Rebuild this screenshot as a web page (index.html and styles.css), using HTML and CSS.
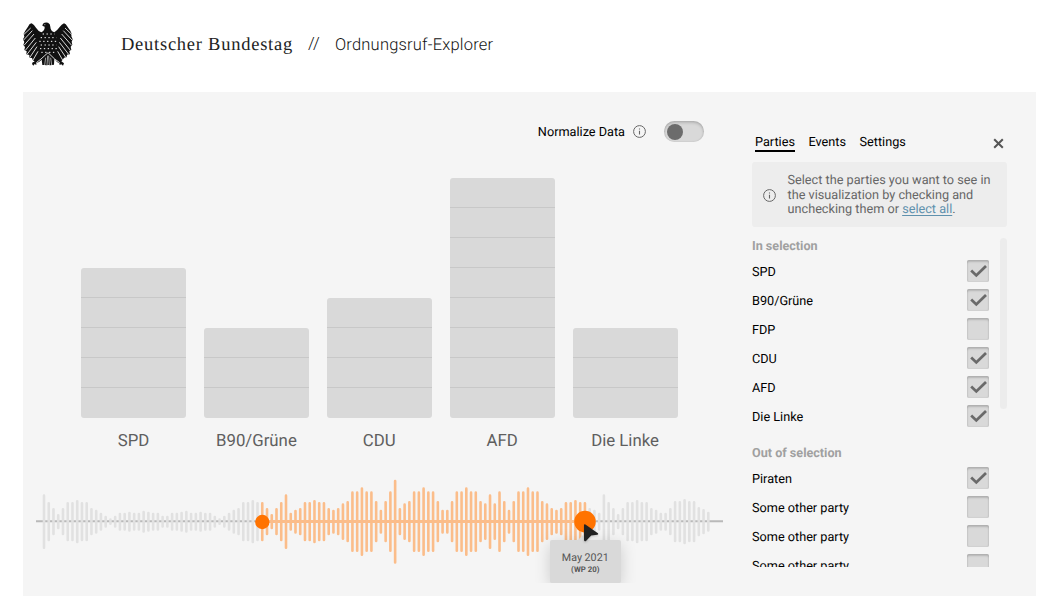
FILE: index.html
```html
<!DOCTYPE html>
<html lang="en">
<head>
<meta charset="utf-8">
<title>Ordnungsruf-Explorer</title>
<link rel="stylesheet" href="styles.css">
</head>
<body>
<svg class="defs" width="0" height="0">
  <symbol id="check" viewBox="0 0 22 22"><path d="M4.2 10.6L9.3 15.4L19 6" fill="none" stroke="#6a6a6a" stroke-width="2.8"/></symbol>
  <symbol id="info" viewBox="0 0 13 13"><circle cx="6.5" cy="6.5" r="5.9" fill="none" stroke="#666" stroke-width="1"/><path d="M6.5 5.7V9.5M6.5 3.4V4.6" stroke="#666" stroke-width="1.1"/></symbol>
</svg>
<header class="header">
  <svg class="eagle" viewBox="24 20 150 132" role="img" aria-label="Bundesadler">
    <path fill="#111" d="M82 31L84 25Q90 20 99 22Q106 25 106 34Q106 46 118 51Q127 45 134 35Q140 27 147 24Q153 26 156 32L160 38L166 46L170 55L169 63L173 72L170 79L172 88L167 94L169 104L163 107L165 117L156 118L155 126L147 127L143 134L139 138L147 144L144 151L139 147L134 149L133 144L126 140L118 130L117 148L111 149L106 150L100 149L94 150L88 149L82 149L80 133L72 140L64 143L64 149L59 146L55 151L51 146L53 141L59 139L53 134L51 128L43 127L43 119L34 117L35 108L28 104L30 95L25 89L28 80L24 72L28 64L26 55L31 46L38 36L44 26L50 24Q57 28 63 37Q70 48 79 51Q90 45 89 34Z"/>
    <g fill="none" stroke="#fff" stroke-width="2.5">
      <path d="M47 38L26 58M52 46L26 74M57 56L27 90M61 68L31 105M64 81L36 117M66 94L44 127M69 108L53 136"/>
      <path d="M150 38L171 58M145 46L171 74M140 56L170 90M136 68L166 105M133 81L161 117M131 94L153 127M128 108L144 136"/>
      <path d="M64 142L78 131L99 112L119 131L134 142"/>
      <path stroke-width="1.8" d="M89 149L92 127M96 150L98 121M103 150L101 121M110 149L107 127"/>
    </g>
    <path fill="none" stroke="#fff" stroke-width="3" stroke-dasharray="4 7.6" d="M83 56H119M77 67H124M73 78H127M77 89H124M75 100H126M79 111H122"/>
    <path d="M88 28h3" stroke="#fff" stroke-width="2"/>
  </svg>
  <div class="brand">Deutscher Bundestag</div>
  <div class="slashes">//</div>
  <div class="product">Ordnungsruf-Explorer</div>
</header>
<main class="panel">
  <section class="main">
    <div class="normalize">
      <span>Normalize Data</span>
      <svg class="info"><use href="#info"/></svg>
      <div class="toggle"><div class="knob"></div></div>
    </div>
    <div class="chart">
      <div class="col"><div class="bar"><i></i><i></i><i></i><i></i><i></i></div><div class="label">SPD</div></div>
      <div class="col"><div class="bar"><i></i><i></i><i></i></div><div class="label">B90/Grüne</div></div>
      <div class="col"><div class="bar"><i></i><i></i><i></i><i></i></div><div class="label">CDU</div></div>
      <div class="col"><div class="bar"><i></i><i></i><i></i><i></i><i></i><i></i><i></i><i></i></div><div class="label">AFD</div></div>
      <div class="col"><div class="bar"><i></i><i></i><i></i></div><div class="label">Die Linke</div></div>
    </div>
    <div class="timeline">
      <svg class="wave" viewBox="0 0 700 110">
        <path d="M6 51.3H693" stroke="#b9b9b9" stroke-width="2"/>
        <path class="wave-off" id="waveOff"/>
        <path d="M232 51.5H555" stroke="#fbbd8a" stroke-width="3"/>
        <path class="wave-on" id="waveOn"/>
        <circle cx="232.3" cy="52" r="7.2" fill="#ff7300"/>
        <circle cx="555" cy="51.6" r="10.8" fill="#ff7300"/>
      </svg>
      <div class="tooltip"><div class="date">May 2021</div><div class="period">(WP 20)</div></div>
      <svg class="cursor" viewBox="0 0 18 20"><path d="M1 2.3Q1 .8 2.4 1.4L14.9 10.3Q15.8 11.4 14.2 11.8L8.2 12.6L3 17.9Q1.3 18.8 1 17Z" fill="#222"/></svg>
    </div>
  </section>
  <aside class="side">
    <nav class="tabs">
      <span class="tab active">Parties</span><span class="tab">Events</span><span class="tab">Settings</span>
      <svg class="close" viewBox="0 0 12 12"><path d="M1.3 1.3L10.7 10.7M10.7 1.3L1.3 10.7" stroke="#555" stroke-width="2.2"/></svg>
    </nav>
    <div class="hint">
      <svg class="info"><use href="#info"/></svg>
      <p>Select the parties you want to see in<br>the visualization by checking and<br>unchecking them or <a>select all</a>.</p>
    </div>
    <div class="scroll">
      <div class="list">
        <h2>In selection</h2>
        <div class="row"><span>SPD</span><div class="box"><svg><use href="#check"/></svg></div></div>
        <div class="row"><span>B90/Grüne</span><div class="box"><svg><use href="#check"/></svg></div></div>
        <div class="row"><span>FDP</span><div class="box"></div></div>
        <div class="row"><span>CDU</span><div class="box"><svg><use href="#check"/></svg></div></div>
        <div class="row"><span>AFD</span><div class="box"><svg><use href="#check"/></svg></div></div>
        <div class="row"><span>Die Linke</span><div class="box"><svg><use href="#check"/></svg></div></div>
        <h2 class="second">Out of selection</h2>
        <div class="row"><span>Piraten</span><div class="box"><svg><use href="#check"/></svg></div></div>
        <div class="row"><span>Some other party</span><div class="box"></div></div>
        <div class="row"><span>Some other party</span><div class="box"></div></div>
        <div class="row"><span>Some other party</span><div class="box"></div></div>
      </div>
      <div class="thumb"></div>
    </div>
  </aside>
</main>
<script src="wave.js"></script>
</body>
</html>
```
FILE: styles.css
```css
* { box-sizing: border-box; }
body { margin: 0; width: 1056px; height: 616px; overflow: hidden; background: #fff; font-family: Roboto, sans-serif; color: #111; text-rendering: geometricPrecision; }
.defs { position: absolute; }
.header { height: 92px; display: flex; align-items: flex-start; padding-left: 23px; white-space: nowrap; }
.eagle { width: 50px; height: 44px; margin-top: 22px; flex: none; }
.brand { width: 187px; margin: 35px 0 0 48px; font: 18.5px/21px "Century Schoolbook", "Liberation Serif", serif; letter-spacing: .75px; color: #222; }
.slashes { width: 27px; margin-top: 34px; font-size: 17px; line-height: 21px; font-weight: 300; }
.product { margin-top: 35px; font-size: 16.5px; line-height: 21px; font-weight: 300; letter-spacing: .2px; }
.panel { margin-left: 22.5px; width: 1013.5px; height: 504px; background: #f5f5f5; display: grid; grid-template-columns: 729.5px 254.5px; }
.main { padding-top: 29px; min-width: 0; }
.normalize { height: 21px; display: flex; align-items: center; justify-content: flex-end; padding-right: 48px; font-size: 12.7px; color: #000; }
.normalize span { padding-top: 2px; }
.info { width: 13px; height: 13px; flex: none; }
.normalize .info { margin: 0 18px 0 8px; }
.toggle { width: 40px; height: 21px; border-radius: 11px; background: #d9d9d9; box-shadow: inset 0 2px 3px rgba(0,0,0,.16), inset 0 0 2px rgba(0,0,0,.14); padding: 3px; }
.knob { width: 16px; height: 16px; border-radius: 50%; background: #6c6c6c; }
.chart { height: 310px; padding: 0 0 0 58.5px; display: flex; gap: 17.9px; align-items: flex-end; }
.col { width: 105px; }
.bar { display: flex; flex-direction: column; border-radius: 3px; overflow: hidden; background: #d9d9d9; }
.bar i { height: 30px; border-bottom: 1px solid #c8c8c8; }
.bar i:last-child { border: 0; }
.label { height: 34px; line-height: 46px; text-align: center; font-size: 16.8px; color: #5f5f5f; }
.timeline { position: relative; height: 140px; padding: 18px 0 0 7.5px; }
.wave { display: block; width: 700px; height: 110px; }
.wave path { fill: none; }
.wave .wave-off { stroke: #e1e1e1; stroke-width: 2.6; stroke-linecap: round; }
.wave .wave-on { stroke: #fbbd8a; stroke-width: 2.6; stroke-linecap: round; }
.tooltip { position: absolute; left: 527px; top: 88px; width: 71.5px; height: 43px; border-radius: 2px; background: #d9d9d9; box-shadow: 0 4px 16px rgba(0,0,0,.17); clip-path: inset(-20px -30px 0 -30px); text-align: center; color: #555; padding-top: 11px; }
.tooltip::before { content: ""; position: absolute; left: 28px; top: -5px; border: 5px solid transparent; border-top: 0; border-bottom-color: #d9d9d9; }
.date { font-size: 10.7px; line-height: 13px; }
.period { font-size: 7.8px; line-height: 12px; font-weight: 700; }
.cursor { position: absolute; left: 560px; top: 71px; width: 18px; height: 20px; filter: drop-shadow(0 1px 1px rgba(0,0,0,.2)); }
.tabs { height: 70px; padding: 42px 3px 0 3px; display: flex; align-items: flex-start; gap: 13.5px; font-size: 12.7px; line-height: 17px; color: #000; }
.tab { height: 18px; }
.active { border-bottom: 2px solid #000; }
.close { width: 11px; height: 11px; margin: 4px 0 0 auto; }
.hint { height: 65px; border-radius: 3px; background: #ededed; display: flex; align-items: center; padding: 1px 0 0 11px; gap: 11.5px; color: #666; }
.hint p { margin: 0; padding-top: 2px; font-size: 12.7px; line-height: 14.7px; white-space: nowrap; }
.hint a { color: #5f91ad; text-decoration: underline; text-underline-offset: 2px; }
.scroll { height: 340px; overflow: hidden; display: flex; justify-content: space-between; }
.list { width: 237px; padding-top: 10px; }
.list h2 { margin: 0; height: 19.5px; font-size: 12.6px; line-height: 19px; font-weight: 700; color: #a0a0a0; }
.list .second { height: 19.5px; margin-top: 13.5px; }
.row { height: 29px; display: flex; align-items: center; justify-content: space-between; font-size: 12.7px; color: #000; }
.row span { padding-top: 2px; }
.box { width: 22px; height: 22px; border-radius: 2px; background: #d9d9d9; box-shadow: inset 0 2px 2px rgba(0,0,0,.16), inset 0 0 2px rgba(0,0,0,.14); }
.box svg { display: block; width: 22px; height: 22px; }
.thumb { width: 7px; height: 171px; margin-top: 11px; border-radius: 4px; background: #ececec; }
```
FILE: wave.js
```js
// Half heights of the activity bars, in thirds of a pixel.
const amps = [
  82,59,41,23,41,59,59,65,59,59,41,36,27,18,10,18,27,27,30,27,27,33,30,27,27,18,18,27,27,30,33,27,27,
  30,27,27,18,10,18,27,36,41,59,59,65,59,59,41,23,41,59,82,27,36,41,59,59,65,59,59,41,36,41,55,62,91,91,
  103,91,91,62,36,62,91,126,41,55,62,91,91,103,91,91,62,36,36,62,91,91,103,91,91,62,55,82,55,91,62,36,62,
  91,91,103,91,91,62,55,41,36,41,59,59,65,59,59,41,36,27,82,59,41,23,41,59,59,65,59,59,41,36,27,27,41,62,
  62,68,62,62,44,38,30
];
const first = 46, last = 114, step = 4.745, mid = 51.7;
let on = "", off = "";
amps.forEach((a, i) => {
  const x = (14 + i * step).toFixed(2), h = a / 3 - 1.3;
  const d = `M${x} ${(mid - h).toFixed(2)}V${(mid + h).toFixed(2)}`;
  if (i >= first && i <= last) on += d; else off += d;
});
document.getElementById("waveOn").setAttribute("d", on);
document.getElementById("waveOff").setAttribute("d", off);
```
